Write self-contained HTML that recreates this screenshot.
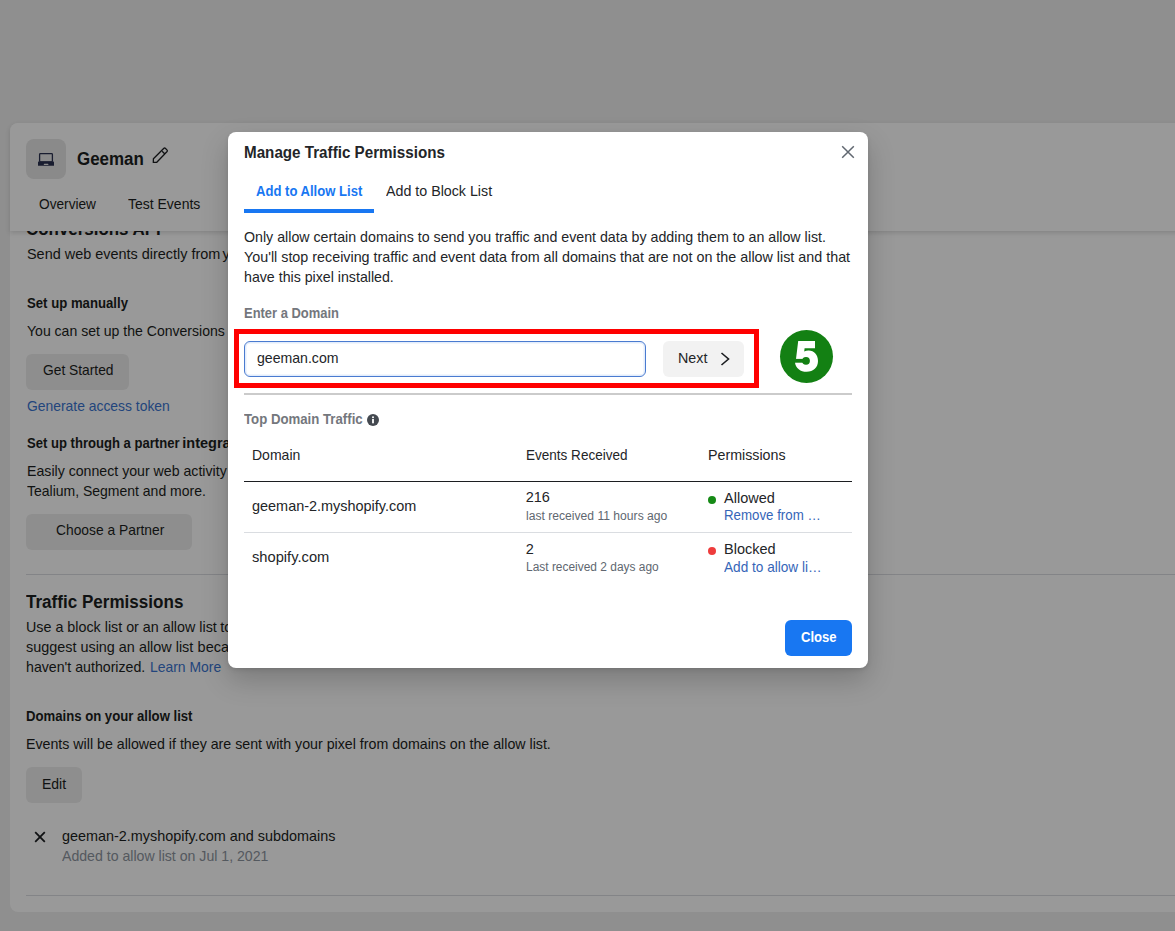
<!DOCTYPE html>
<html><head><meta charset="utf-8">
<style>
html,body{margin:0;padding:0;}
body{width:1175px;height:931px;overflow:hidden;position:relative;background:#eeeeee;font-family:"Liberation Sans",sans-serif;}
.t{position:absolute;white-space:nowrap;line-height:1;transform-origin:0 0;z-index:2;}
.a{position:absolute;}
#card{left:10px;top:123px;width:1200px;height:789px;background:#fff;border-radius:8px;z-index:0;}
#hdr{left:10px;top:123px;width:1200px;height:108px;background:#fff;border-radius:8px 8px 0 0;box-shadow:0 2px 5px rgba(0,0,0,0.14);z-index:1;}
#b3{z-index:0 !important;}
.btn{position:absolute;background:#ededed;border-radius:6px;}
.div{position:absolute;height:1px;background:#dadde1;}
#ov{left:0;top:0;width:1175px;height:931px;background:rgba(0,0,0,0.4);z-index:5;}
#modal{left:228px;top:132px;width:640px;height:536px;background:#fff;border-radius:8px;z-index:6;box-shadow:0 12px 28px rgba(0,0,0,0.2),0 2px 4px rgba(0,0,0,0.1);}
#mtext{position:absolute;left:0;top:0;width:1175px;height:931px;z-index:7;}
</style></head><body>
<div id="card" class="a"></div>
<div id="hdr" class="a"></div>
<div class="a" style="left:26px;top:139px;width:40px;height:40px;background:#e6e6e6;border-radius:8px;z-index:2;"></div>
<svg class="a" style="left:36px;top:150px;z-index:3" width="20" height="18" viewBox="0 0 20 18">
 <rect x="3.6" y="3.6" width="12.8" height="8.2" rx="0.8" fill="none" stroke="#2b3150" stroke-width="1.3"/>
 <path d="M2.6 11.5 H17.4 Q18 11.5 18 12.2 V15.7 H2 V12.2 Q2 11.5 2.6 11.5 Z" fill="#2b3150"/>
 <rect x="7.8" y="13.8" width="4.6" height="1.1" rx="0.5" fill="#e6e6e6"/>
</svg>
<svg class="a" style="left:148px;top:143px;z-index:3" width="26" height="26" viewBox="0 0 26 26">
 <path d="M5.4 15.8 L15.9 5.3 Q16.6 4.7 17.3 5.3 L19.1 7.1 Q19.7 7.8 19.1 8.5 L8.8 19.3 L5.3 19.4 Z" fill="none" stroke="#1c1e21" stroke-width="1.3" stroke-linejoin="round"/>
 <path d="M14.1 8.2 L16.9 11.0" stroke="#1c1e21" stroke-width="1.3"/>
</svg>
<div class="btn" style="left:26px;top:354px;width:103px;height:36px;"></div>
<div class="btn" style="left:26px;top:514px;width:166px;height:36px;"></div>
<div class="btn" style="left:26px;top:767px;width:56px;height:36px;"></div>
<div class="div" style="left:26px;top:574px;width:1160px;"></div>
<div class="div" style="left:26px;top:895px;width:1160px;"></div>
<svg class="a" style="left:33px;top:830px;z-index:3" width="14" height="14" viewBox="0 0 14 14">
 <path d="M2.2 2.2 L11.8 11.8 M11.8 2.2 L2.2 11.8" stroke="#1c1e21" stroke-width="1.8"/>
</svg>
<div class="t" id="b0" style="left:77.4px;top:149.56px;font-size:18px;font-weight:700;color:#1c1e21;transform:scaleX(0.9416);">Geeman</div>
<div class="t" id="b1" style="left:38.8px;top:196.30px;font-size:15px;font-weight:400;color:#1c1e21;transform:scaleX(0.9118);">Overview</div>
<div class="t" id="b2" style="left:128.0px;top:196.40px;font-size:15px;font-weight:400;color:#1c1e21;transform:scaleX(0.9323);">Test Events</div>
<div class="t" id="b3" style="z-index:0;left:26.0px;top:220.36px;font-size:18px;font-weight:700;color:#1c1e21;transform:scaleX(0.9402);">Conversions API</div>
<div class="t" id="b4" style="left:26.5px;top:247.13px;font-size:14.5px;font-weight:400;color:#1c1e21;transform:scaleX(0.9952);">Send web events directly from</div>
<div class="t" id="b5" style="left:222.5px;top:247.13px;font-size:14.5px;font-weight:400;color:#1c1e21;">your website</div>
<div class="t" id="b6" style="left:26.5px;top:295.83px;font-size:14.5px;font-weight:700;color:#1c1e21;transform:scaleX(0.9082);">Set up manually</div>
<div class="t" id="b7" style="left:26.5px;top:323.53px;font-size:14.5px;font-weight:400;color:#1c1e21;transform:scaleX(0.9686);">You can set up the Conversions</div>
<div class="t" id="b8" style="left:42.8px;top:363.23px;font-size:14.5px;font-weight:400;color:#1c1e21;transform:scaleX(0.9507);">Get Started</div>
<div class="t" id="b9" style="left:26.5px;top:398.73px;font-size:14.5px;font-weight:400;color:#3a74d0;transform:scaleX(0.9576);">Generate access token</div>
<div class="t" id="b10" style="left:26.5px;top:435.83px;font-size:14.5px;font-weight:700;color:#1c1e21;transform:scaleX(0.9015);">Set up through a partner</div>
<div class="t" id="b11" style="left:182.3px;top:435.83px;font-size:14.5px;font-weight:700;color:#1c1e21;">integration</div>
<div class="t" id="b12" style="left:26.5px;top:463.53px;font-size:14.5px;font-weight:400;color:#1c1e21;transform:scaleX(0.9756);">Easily connect your web activity</div>
<div class="t" id="b13" style="left:26.5px;top:483.53px;font-size:14.5px;font-weight:400;color:#1c1e21;transform:scaleX(0.9645);">Tealium, Segment and more.</div>
<div class="t" id="b14" style="left:55.5px;top:522.93px;font-size:14.5px;font-weight:400;color:#1c1e21;transform:scaleX(0.9529);">Choose a Partner</div>
<div class="t" id="b15" style="left:26.0px;top:593.26px;font-size:18px;font-weight:700;color:#1c1e21;transform:scaleX(0.9477);">Traffic Permissions</div>
<div class="t" id="b16" style="left:26.0px;top:620.13px;font-size:14.5px;font-weight:400;color:#1c1e21;transform:scaleX(0.9864);">Use a block list or an allow list</div>
<div class="t" id="b17" style="left:220.3px;top:620.13px;font-size:14.5px;font-weight:400;color:#1c1e21;">to control</div>
<div class="t" id="b18" style="left:26.0px;top:639.53px;font-size:14.5px;font-weight:400;color:#1c1e21;transform:scaleX(0.9931);">suggest using an allow list</div>
<div class="t" id="b19" style="left:197.6px;top:639.53px;font-size:14.5px;font-weight:400;color:#1c1e21;">because</div>
<div class="t" id="b20" style="left:26.0px;top:659.93px;font-size:14.5px;font-weight:400;color:#1c1e21;transform:scaleX(0.9772);">haven't authorized.</div>
<div class="t" id="b21" style="left:150.0px;top:659.93px;font-size:14.5px;font-weight:400;color:#3a74d0;transform:scaleX(0.9601);">Learn More</div>
<div class="t" id="b22" style="left:26.0px;top:708.63px;font-size:14.5px;font-weight:700;color:#1c1e21;transform:scaleX(0.9064);">Domains on your allow list</div>
<div class="t" id="b23" style="left:26.0px;top:736.93px;font-size:14.5px;font-weight:400;color:#1c1e21;transform:scaleX(0.9792);">Events will be allowed if they are sent with your pixel from domains on the allow list.</div>
<div class="t" id="b24" style="left:42.2px;top:777.13px;font-size:14.5px;font-weight:400;color:#1c1e21;transform:scaleX(0.9640);">Edit</div>
<div class="t" id="b25" style="left:62.4px;top:828.63px;font-size:14.5px;font-weight:400;color:#1c1e21;transform:scaleX(0.9928);">geeman-2.myshopify.com and subdomains</div>
<div class="t" id="b26" style="left:62.4px;top:848.63px;font-size:14.5px;font-weight:400;color:#8d949e;transform:scaleX(0.9736);">Added to allow list on Jul 1, 2021</div>
<div id="ov" class="a"></div>
<div id="modal" class="a"></div>
<div id="mtext">
<svg class="a" style="left:840px;top:144px" width="16" height="16" viewBox="0 0 16 16">
 <path d="M2.2 2.2 L13.8 13.8 M13.8 2.2 L2.2 13.8" stroke="#606770" stroke-width="1.5"/>
</svg>
<div class="a" style="left:244px;top:209px;width:130px;height:4px;background:#1877f2;"></div>
<div class="a" style="left:234px;top:329px;width:525px;height:59px;border:5px solid #ff0000;box-sizing:border-box;"></div>
<div class="a" style="left:244px;top:341px;width:402px;height:36px;border:1px solid #4a7bd0;border-radius:6px;box-sizing:border-box;box-shadow:inset 0 0 0 1.5px #e3edfc;"></div>
<div class="a" style="left:663px;top:341px;width:81px;height:36px;background:#f2f2f2;border-radius:6px;"></div>
<svg class="a" style="left:718px;top:350px" width="14" height="18" viewBox="0 0 14 18">
 <path d="M3.5 3 L10.5 9 L3.5 15" fill="none" stroke="#1c1e21" stroke-width="1.6"/>
</svg>
<svg class="a" style="left:776px;top:326px" width="60" height="60" viewBox="776 326 60 60">
 <circle cx="806.5" cy="356.5" r="26.5" fill="#138013"/>
 <path d="M798.2 341.1 L815 341.1 L815 348.2 L804.6 348.2 L804.2 351.5 C805.6 350.9 807 350.6 808.6 350.6 C814.2 350.6 818 354.8 818 361 C818 367.6 813.4 371.8 806.6 371.8 C800.4 371.8 795.8 368.2 795 362.7 L796 358.9 Z" fill="#fff"/>
 <rect x="793" y="358.9" width="13" height="3.8" fill="#138013"/>
 <circle cx="806" cy="360.8" r="3.9" fill="#138013"/>
</svg>
<div class="a" style="left:244px;top:393px;width:608px;height:2px;background:#cbcbcb;"></div>
<svg class="a" style="left:367px;top:413.8px" width="12" height="12" viewBox="0 0 12 12">
 <circle cx="6" cy="6" r="6" fill="#444950"/>
 <rect x="5.1" y="5" width="1.8" height="4.3" fill="#fff"/>
 <circle cx="6" cy="3.3" r="1" fill="#fff"/>
</svg>
<div class="a" style="left:244px;top:481px;width:608px;height:1px;background:#1c1e21;"></div>
<div class="a" style="left:244px;top:532px;width:608px;height:1px;background:#dadde1;"></div>
<div class="a" style="left:708px;top:496px;width:8px;height:8px;border-radius:50%;background:#168a16;"></div>
<div class="a" style="left:708px;top:547px;width:8px;height:8px;border-radius:50%;background:#ee3c3c;"></div>
<div class="a" style="left:785px;top:620px;width:67px;height:36px;background:#1877f2;border-radius:6px;"></div>
<div class="t" id="m0" style="left:244.3px;top:145.36px;font-size:16px;font-weight:700;color:#232528;transform:scaleX(0.9493);">Manage Traffic Permissions</div>
<div class="t" id="m1" style="left:255.7px;top:184.43px;font-size:14.5px;font-weight:700;color:#1877f2;transform:scaleX(0.9018);">Add to Allow List</div>
<div class="t" id="m2" style="left:386.3px;top:184.43px;font-size:14.5px;font-weight:400;color:#232528;transform:scaleX(0.9824);">Add to Block List</div>
<div class="t" id="m3" style="left:244.3px;top:230.43px;font-size:14.5px;font-weight:400;color:#232528;transform:scaleX(0.9800);">Only allow certain domains to send you traffic and event data by adding them to an allow list.</div>
<div class="t" id="m4" style="left:244.3px;top:250.23px;font-size:14.5px;font-weight:400;color:#232528;transform:scaleX(0.9875);">You'll stop receiving traffic and event data from all domains that are not on the allow list and that</div>
<div class="t" id="m5" style="left:244.3px;top:269.93px;font-size:14.5px;font-weight:400;color:#232528;transform:scaleX(0.9781);">have this pixel installed.</div>
<div class="t" id="m6" style="left:244.3px;top:306.43px;font-size:14.5px;font-weight:700;color:#74777d;transform:scaleX(0.8932);">Enter a Domain</div>
<div class="t" id="m7" style="left:257.0px;top:351.13px;font-size:14.5px;font-weight:400;color:#232528;transform:scaleX(0.9722);">geeman.com</div>
<div class="t" id="m8" style="left:678.4px;top:350.63px;font-size:14.5px;font-weight:400;color:#232528;transform:scaleX(0.9856);">Next</div>
<div class="t" id="m9" style="left:244.3px;top:412.43px;font-size:14.5px;font-weight:700;color:#74777d;transform:scaleX(0.9113);">Top Domain Traffic</div>
<div class="t" id="m10" style="left:251.9px;top:447.73px;font-size:14.5px;font-weight:400;color:#232528;transform:scaleX(0.9666);">Domain</div>
<div class="t" id="m11" style="left:525.7px;top:447.73px;font-size:14.5px;font-weight:400;color:#232528;transform:scaleX(0.9328);">Events Received</div>
<div class="t" id="m12" style="left:708.0px;top:447.73px;font-size:14.5px;font-weight:400;color:#232528;transform:scaleX(0.9827);">Permissions</div>
<div class="t" id="m13" style="left:251.9px;top:498.93px;font-size:14.5px;font-weight:400;color:#232528;transform:scaleX(0.9961);">geeman-2.myshopify.com</div>
<div class="t" id="m14" style="left:525.7px;top:490.43px;font-size:14.5px;font-weight:400;color:#232528;">216</div>
<div class="t" id="m15" style="left:525.7px;top:509.54px;font-size:12px;font-weight:400;color:#606770;transform:scaleX(1.0102);">last received 11 hours ago</div>
<div class="t" id="m16" style="left:724.1px;top:491.33px;font-size:14.5px;font-weight:400;color:#232528;">Allowed</div>
<div class="t" id="m17" style="left:724.1px;top:508.33px;font-size:14.5px;font-weight:400;color:#3565b8;transform:scaleX(0.9160);">Remove from …</div>
<div class="t" id="m18" style="left:251.9px;top:550.03px;font-size:14.5px;font-weight:400;color:#232528;transform:scaleX(1.0131);">shopify.com</div>
<div class="t" id="m19" style="left:525.7px;top:541.53px;font-size:14.5px;font-weight:400;color:#232528;">2</div>
<div class="t" id="m20" style="left:525.7px;top:560.84px;font-size:12px;font-weight:400;color:#606770;transform:scaleX(0.9946);">Last received 2 days ago</div>
<div class="t" id="m21" style="left:724.1px;top:542.33px;font-size:14.5px;font-weight:400;color:#232528;">Blocked</div>
<div class="t" id="m22" style="left:724.1px;top:559.53px;font-size:14.5px;font-weight:400;color:#3565b8;transform:scaleX(0.9387);">Add to allow li…</div>
<div class="t" id="m23" style="left:800.8px;top:629.00px;font-size:15px;font-weight:700;color:#ffffff;transform:scaleX(0.8713);">Close</div>
</div>
</body></html>
